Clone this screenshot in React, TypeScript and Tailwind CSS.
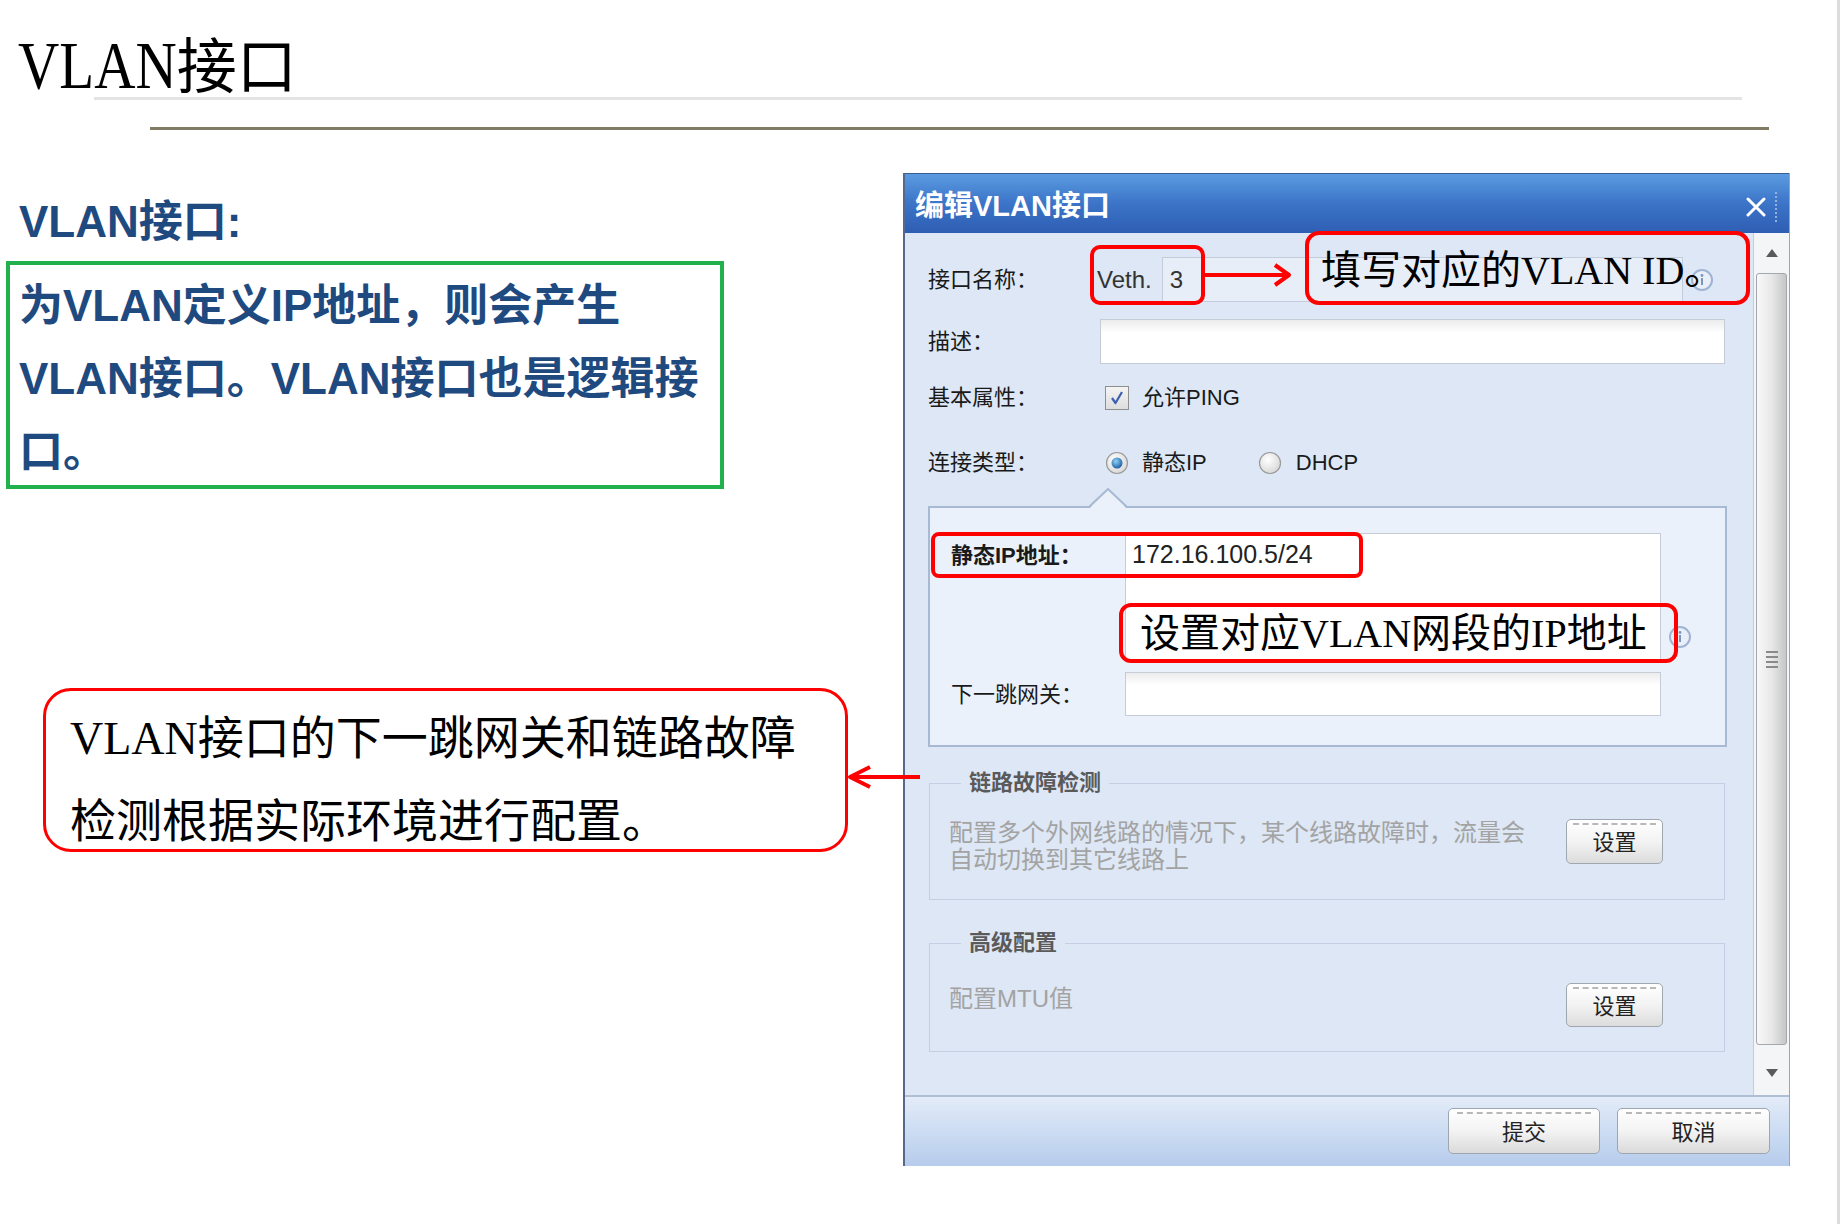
import React from 'react';

const sans = "font-['Liberation_Sans','Noto_Sans_CJK_SC',sans-serif]";
const serifCjk = "font-['Liberation_Serif','Noto_Sans_CJK_SC',serif]";

function InfoIcon({ className = '' }: { className?: string }) {
  return (
    <svg className={`h-[24px] w-[24px] shrink-0 ${className}`} viewBox="0 0 24 24">
      <circle cx="12" cy="12" r="10" fill="#e9eff8" stroke="#9fb3d3" strokeWidth="2" />
      <circle cx="12" cy="7.5" r="1.4" fill="#7d94bc" />
      <rect x="11" y="10" width="2" height="7" fill="#7d94bc" />
    </svg>
  );
}

function RadioDot({ checked }: { checked?: boolean }) {
  return (
    <svg className="h-[24px] w-[24px] shrink-0" viewBox="0 0 24 24">
      <defs>
        <radialGradient id="rg-off" cx="40%" cy="35%" r="70%">
          <stop offset="0%" stopColor="#ffffff" />
          <stop offset="100%" stopColor="#d6d6d6" />
        </radialGradient>
        <radialGradient id="rg-on" cx="40%" cy="35%" r="70%">
          <stop offset="0%" stopColor="#8fd3f7" />
          <stop offset="100%" stopColor="#17599e" />
        </radialGradient>
      </defs>
      <circle cx="12" cy="12" r="10.5" fill="url(#rg-off)" stroke="#9a9a9a" strokeWidth="1.2" />
      {checked && <circle cx="12" cy="12" r="5.5" fill="url(#rg-on)" />}
    </svg>
  );
}

export default function App() {
  return (
    <div className={`relative h-[1224px] w-[1840px] overflow-hidden border-r-[3px] border-[#dcdcdc] bg-white ${sans}`}>
      {/* 标题 */}
      <div className="h-[97px] pl-[18px] pt-[31px]">
        <h1 className="flex items-baseline whitespace-nowrap leading-[62px] text-black">
          <span className="mr-[-30px] inline-block origin-left scale-x-[0.84] font-['Liberation_Serif',serif] text-[68px]">
            VLAN
          </span>
          <span className="font-['Noto_Sans_CJK_SC',sans-serif] text-[60px]">接口</span>
        </h1>
      </div>
      <div className="ml-[94px] h-[3px] w-[1648px] bg-[#e4e4e4]" />
      <div className="ml-[150px] mt-[27px] h-[3px] w-[1619px] bg-[#807c66]" />

      <div className="relative mt-[43px] flex">
        {/* 左侧说明 */}
        <div className="w-[903px] shrink-0 pt-[21px]">
          <h2 className="pl-[19px] text-[44px] font-bold leading-[56px] text-[#1f4a80]">VLAN接口:</h2>
          <div className="ml-[6px] mt-[11px] h-[228px] w-[718px] whitespace-nowrap border-[4px] border-[#22b14c] pl-[9px] pt-[4px] text-[44px] font-bold leading-[73px] text-[#1f4a80]">
            为VLAN定义IP地址，则会产生
            <br />
            VLAN接口。VLAN接口也是逻辑接
            <br />
            口。
          </div>
          <div className={`ml-[43px] mt-[199px] h-[164px] w-[805px] whitespace-nowrap rounded-[28px] border-[3px] border-[#ff0000] pl-[24px] pt-[6px] text-[46px] leading-[83px] text-black ${serifCjk}`}>
            VLAN接口的下一跳网关和链路故障
            <br />
            检测根据实际环境进行配置。
          </div>
        </div>

        {/* 编辑VLAN接口 对话框 */}
        <div className="flex h-[993px] w-[887px] shrink-0 flex-col border-l-2 border-r border-l-[#56698b] border-r-[#9aa6b8] bg-[#dde7f5]">
          <div className="flex h-[60px] shrink-0 items-center justify-between border-t border-[#3b5c93] bg-gradient-to-b from-[#5b9be0] via-[#3c74c8] to-[#2e5eb3] pl-[10px] pr-[12px] pt-[7px]">
            <span className="text-[29px] font-bold text-white">编辑VLAN接口</span>
            <div className="flex items-center">
              <svg className="h-[20px] w-[20px]" viewBox="0 0 20 20">
                <path d="M2 2 L18 18 M18 2 L2 18" stroke="#ffffff" strokeWidth="3" strokeLinecap="round" />
              </svg>
              <span className="ml-[9px] h-[30px] border-l-2 border-dotted border-[#8fb0e0]" />
            </div>
          </div>

          <div className="relative flex h-[862px] shrink-0">
            <div className="flex-1 pl-[23px] pt-[24px] text-[22px] text-[#1a1a1a]">
              <div className="flex h-[45px] items-center">
                <span className="w-[172px] shrink-0">接口名称：</span>
                <span className="-ml-[3px] text-[24px] text-[#333]">Veth.</span>
                <div className="ml-[10px] flex h-[45px] w-[521px] items-center border border-[#c3ccda] bg-[#e8eef7] pl-[7px] text-[24px] text-[#333]">
                  3
                </div>
                <InfoIcon className="ml-[7px]" />
              </div>

              <div className="mt-[17px] flex h-[45px] items-center">
                <span className="w-[172px] shrink-0">描述：</span>
                <div className="h-[45px] w-[625px] border border-[#c6ccd6] bg-gradient-to-b from-[#ececec] to-white to-30%" />
              </div>

              <div className="mt-[21px] flex h-[25px] items-center">
                <span className="w-[172px] shrink-0">基本属性：</span>
                <span className="ml-[5px] flex h-[24px] w-[24px] items-center justify-center border border-[#8e8f8f] bg-gradient-to-b from-[#f4f4f4] to-[#dedede]">
                  <svg className="h-[18px] w-[18px]" viewBox="0 0 18 18">
                    <path d="M4 9 L7.5 14 L14 3" fill="none" stroke="#3d5fb0" strokeWidth="2.2" strokeLinejoin="round" />
                  </svg>
                </span>
                <span className="ml-[13px]">允许PING</span>
              </div>

              <div className="mt-[40px] flex h-[25px] items-center">
                <span className="w-[172px] shrink-0">连接类型：</span>
                <span className="ml-[5px]">
                  <RadioDot checked />
                </span>
                <span className="ml-[13px]">静态IP</span>
                <span className="ml-[51px]">
                  <RadioDot />
                </span>
                <span className="ml-[14px]">DHCP</span>
              </div>

              <div className="relative mt-[31px] h-[241px] w-[799px] border-2 border-[#a8b9d3] bg-[#eaf1fa] pl-[21px] pt-[25px]">
                <svg className="absolute left-[159px] top-[-20px] h-[20px] w-[40px]" viewBox="0 0 40 20">
                  <polygon points="0,21 19,1 38,21" fill="#eaf1fa" />
                  <polyline points="0,19 19,1 38,19" fill="none" stroke="#a8b9d3" strokeWidth="2" />
                </svg>
                <div className="flex items-start">
                  <span className="flex h-[45px] w-[174px] shrink-0 items-center font-bold">静态IP地址：</span>
                  <div className="h-[127px] w-[536px] border border-[#c6ccd6] bg-white pl-[6px] text-[25px] leading-[40px] text-[#222]">
                    172.16.100.5/24
                  </div>
                  <InfoIcon className="ml-[7px] mt-[92px]" />
                </div>
                <div className="mt-[12px] flex items-center">
                  <span className="w-[174px] shrink-0">下一跳网关：</span>
                  <div className="h-[44px] w-[536px] border border-[#c6ccd6] bg-gradient-to-b from-[#ececec] to-white to-30%" />
                </div>
              </div>

              <fieldset className="ml-[1px] mt-[24px] w-[796px] border border-[#c3d0e3] pb-[26px] pl-[19px] pr-[61px] pt-[24px]">
                <legend className="ml-[12px] px-[8px] text-[22px] font-bold leading-[24px] text-[#5a5a5a]">链路故障检测</legend>
                <div className="flex items-start justify-between">
                  <p className="text-[24px] leading-[27px] text-[#a3a3a3]">
                    配置多个外网线路的情况下，某个线路故障时，流量会
                    <br />
                    自动切换到其它线路上
                  </p>
                  <button className="flex h-[45px] w-[97px] flex-col items-stretch rounded-[5px] border border-[#a0a7b1] bg-gradient-to-b from-white via-[#f3f3f3] to-[#dcdcdc] px-[6px] pt-[3px] text-[22px] text-[#222]">
                    <span className="border-t-2 border-dashed border-[#b8b8b8]" />
                    <span className="leading-[36px]">设置</span>
                  </button>
                </div>
              </fieldset>

              <fieldset className="ml-[1px] mt-[31px] w-[796px] border border-[#c3d0e3] pb-[24px] pl-[19px] pr-[61px] pt-[28px]">
                <legend className="ml-[12px] px-[8px] text-[22px] font-bold leading-[24px] text-[#5a5a5a]">高级配置</legend>
                <div className="flex items-start justify-between">
                  <p className="mt-[2px] text-[24px] leading-[27px] text-[#a3a3a3]">配置MTU值</p>
                  <button className="flex h-[44px] w-[97px] flex-col items-stretch rounded-[5px] border border-[#a0a7b1] bg-gradient-to-b from-white via-[#f3f3f3] to-[#dcdcdc] px-[6px] pt-[3px] text-[22px] text-[#222]">
                    <span className="border-t-2 border-dashed border-[#b8b8b8]" />
                    <span className="leading-[35px]">设置</span>
                  </button>
                </div>
              </fieldset>
            </div>

            {/* 滚动条 */}
            <div className="flex w-[36px] shrink-0 flex-col items-center border-l border-[#c8ccd2] bg-[#f4f5f7]">
              <svg className="mt-[16px] h-[8px] w-[12px]" viewBox="0 0 12 8">
                <polygon points="6,0 12,8 0,8" fill="#5a5a5a" />
              </svg>
              <div className="mt-[16px] flex h-[772px] w-[31px] flex-col items-center justify-center gap-[3px] rounded-[3px] border border-[#a4a7ab] bg-gradient-to-r from-[#f8f8f8] via-[#e8e8e8] to-[#c6c6c6]">
                <span className="h-[2px] w-[12px] bg-[#8a8a8a]" />
                <span className="h-[2px] w-[12px] bg-[#8a8a8a]" />
                <span className="h-[2px] w-[12px] bg-[#8a8a8a]" />
                <span className="h-[2px] w-[12px] bg-[#8a8a8a]" />
              </div>
              <svg className="mt-[24px] h-[8px] w-[12px]" viewBox="0 0 12 8">
                <polygon points="0,0 12,0 6,8" fill="#5a5a5a" />
              </svg>
            </div>

            {/* 标注 */}
            <div className="absolute left-[185px] top-[12px] h-[60px] w-[115px] rounded-[10px] border-[4px] border-[#ff0000]" />
            <svg className="absolute left-[300px] top-[30px] h-[24px] w-[87px]" viewBox="0 0 87 24">
              <path d="M0 12 H83" stroke="#ff0000" strokeWidth="4" />
              <polyline points="70,2 84,12 70,22" fill="none" stroke="#ff0000" strokeWidth="4" strokeLinejoin="round" />
            </svg>
            <div className={`absolute left-[400px] top-[-2px] flex h-[74px] w-[445px] items-center whitespace-nowrap rounded-[14px] border-[4px] border-[#ff0000] pl-[12px] pt-[6px] text-[40px] leading-[44px] text-black ${serifCjk}`}>
              填写对应的VLAN ID。
            </div>
            <div className="absolute left-[26px] top-[299px] h-[46px] w-[432px] rounded-[8px] border-[4px] border-[#ff0000]" />
            <div className={`absolute left-[214px] top-[370px] flex h-[60px] w-[559px] items-center whitespace-nowrap rounded-[12px] border-[4px] border-[#ff0000] pl-[17px] pt-[2px] text-[40px] leading-[44px] text-black ${serifCjk}`}>
              设置对应VLAN网段的IP地址
            </div>
          </div>

          <div className="flex h-[71px] shrink-0 items-start justify-end gap-[17px] border-t-2 border-[#aebfd6] bg-gradient-to-b from-[#e3ecf8] to-[#b6ccec] pr-[19px] pt-[11px]">
            <button className="flex h-[46px] w-[152px] flex-col items-stretch rounded-[5px] border border-[#9ea6b2] bg-gradient-to-b from-white via-[#f3f3f3] to-[#dadada] px-[8px] pt-[3px] text-[22px] text-[#222]">
              <span className="border-t-2 border-dashed border-[#b8b8b8]" />
              <span className="leading-[37px]">提交</span>
            </button>
            <button className="flex h-[46px] w-[153px] flex-col items-stretch rounded-[5px] border border-[#9ea6b2] bg-gradient-to-b from-white via-[#f3f3f3] to-[#dadada] px-[8px] pt-[3px] text-[22px] text-[#222]">
              <span className="border-t-2 border-dashed border-[#b8b8b8]" />
              <span className="leading-[37px]">取消</span>
            </button>
          </div>
        </div>

        <svg className="absolute left-[846px] top-[592px] h-[24px] w-[74px]" viewBox="0 0 74 24">
          <path d="M4 12 H74" stroke="#ff0000" strokeWidth="4" />
          <polyline points="24,2 4,12 24,22" fill="none" stroke="#ff0000" strokeWidth="4" strokeLinejoin="round" />
        </svg>
      </div>
    </div>
  );
}
